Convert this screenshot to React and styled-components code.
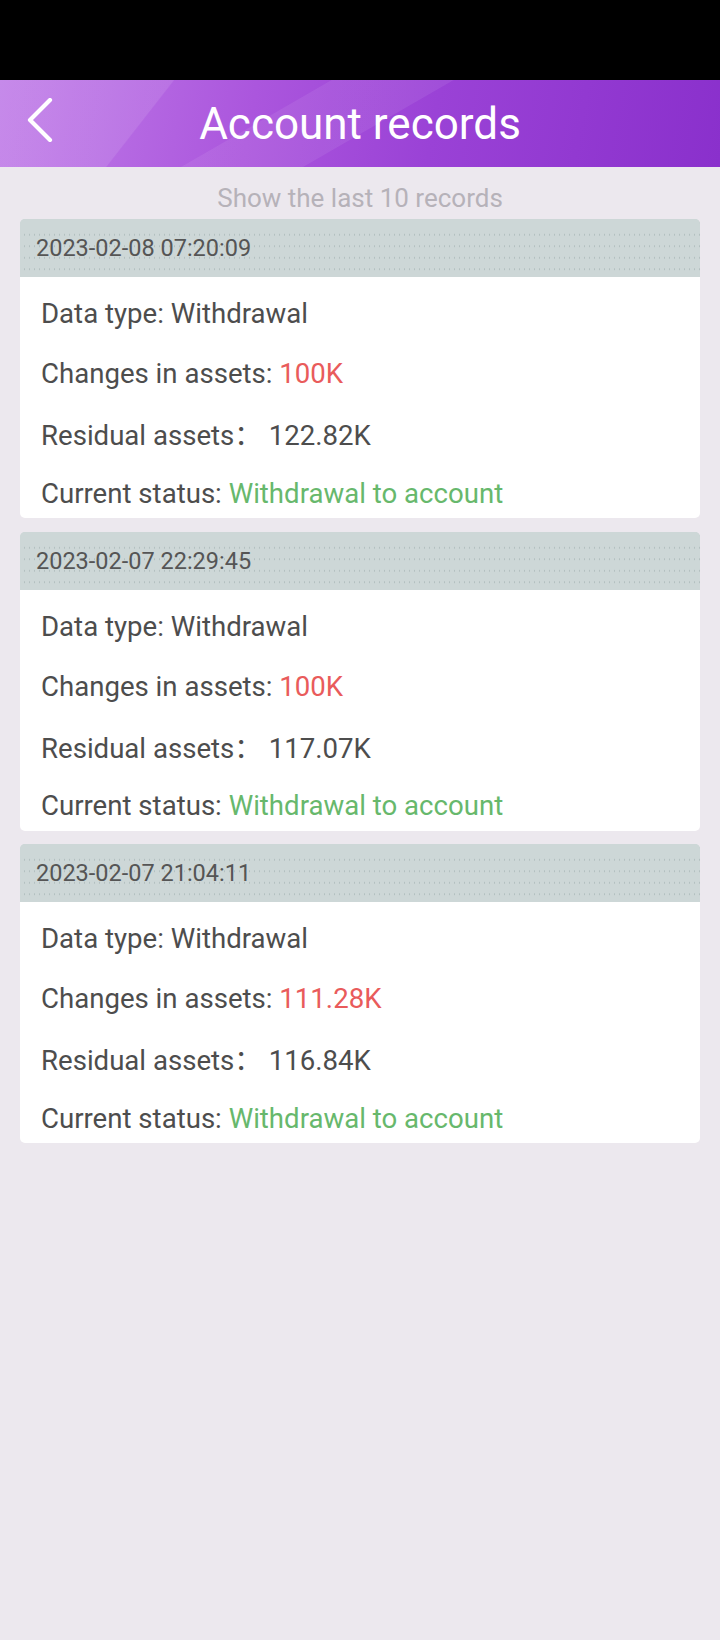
import React from "react";
import styled, { createGlobalStyle } from "styled-components";

const fontStack = `Roboto, "Noto Sans CJK SC", sans-serif`;

const GlobalStyle = createGlobalStyle`
  html, body {
    margin: 0;
    padding: 0;
    background: #ece8ee;
  }
  body {
    font-family: ${fontStack};
  }
  #root {
    min-height: 1640px;
    background: #ece8ee;
  }
`;

const records = [
  {
    date: "2023-02-08 07:20:09",
    type: "Withdrawal",
    change: "100K",
    residual: "122.82K",
    status: "Withdrawal to account",
  },
  {
    date: "2023-02-07 22:29:45",
    type: "Withdrawal",
    change: "100K",
    residual: "117.07K",
    status: "Withdrawal to account",
  },
  {
    date: "2023-02-07 21:04:11",
    type: "Withdrawal",
    change: "111.28K",
    residual: "116.84K",
    status: "Withdrawal to account",
  },
];

const BackIcon = () => (
  <svg width="28" height="44" viewBox="0 0 28 44" fill="none">
    <path
      d="M24 2 L4 22 L24 42"
      stroke="#fff"
      strokeWidth="4.2"
      strokeLinecap="round"
      strokeLinejoin="round"
    />
  </svg>
);

const App = () => {
  return (
    <>
      <GlobalStyle />
      <StyledPage>
        <StatusBar />
        <StyledHeader>
          <BackButton>
            <BackIcon />
          </BackButton>
          <h1>Account records</h1>
        </StyledHeader>
        <Hint>Show the last 10 records</Hint>
        <RecordList>
          {records.map((r) => (
            <Record key={r.date}>
              <DateBar>{r.date}</DateBar>
              <RecordBody>
                <Line>Data type: {r.type}</Line>
                <Line>
                  Changes in assets: <Value tone="red">{r.change}</Value>
                </Line>
                <Line>Residual assets： {r.residual}</Line>
                <Line>
                  Current status: <Value tone="green">{r.status}</Value>
                </Line>
              </RecordBody>
            </Record>
          ))}
        </RecordList>
      </StyledPage>
    </>
  );
};

const StyledPage = styled.div`
  width: 720px;
  min-height: 1640px;
  background: #ece8ee;
  display: flex;
  flex-direction: column;
`;

const StatusBar = styled.div`
  height: 80px;
  background: #000;
`;

const StyledHeader = styled.header`
  height: 87px;
  position: relative;
  display: flex;
  align-items: center;
  justify-content: center;
  background:
    linear-gradient(128deg, rgba(255, 255, 255, 0.1) 0 22%, transparent 22.2%),
    linear-gradient(150deg, transparent 0 38%, rgba(255, 255, 255, 0.07) 38.2% 52%, transparent 52.2%),
    linear-gradient(100deg, #c07de8 0%, #ab56dd 35%, #9a42d6 60%, #8a30cc 100%);

  h1 {
    margin: 0;
    font: 400 44px ${fontStack};
    color: #fff;
    letter-spacing: 0;
  }
`;

const BackButton = styled.div`
  position: absolute;
  left: 26px;
  top: 18px;
  display: flex;
`;

const Hint = styled.div`
  height: 52px;
  display: flex;
  align-items: center;
  justify-content: center;
  font: 400 26px ${fontStack};
  color: #b6b2b9;
  padding-top: 9px;
  box-sizing: border-box;
`;

const RecordList = styled.div`
  display: flex;
  flex-direction: column;
  gap: 13.5px;
  padding: 0 20px;
`;

const Record = styled.div`
  display: flex;
  flex-direction: column;
  border-radius: 5px;
  overflow: hidden;
`;

const DateBar = styled.div`
  height: 58px;
  display: flex;
  align-items: center;
  padding-left: 16px;
  font: 400 23.5px ${fontStack};
  color: #555;
  background-color: #cdd7d7;
  background-image:
    linear-gradient(#cdd7d7, #cdd7d7),
    radial-gradient(circle, rgba(140, 158, 158, 0.4) 0.7px, transparent 1px);
  background-size: 100% 10px, 5px 11.5px;
  background-repeat: no-repeat, repeat;
  background-position: 0 0, 2px 10px;
`;

const RecordBody = styled.div`
  background: #fff;
  height: 241px;
  box-sizing: border-box;
  padding: 7px 0 0 21px;
  display: grid;
  grid-auto-rows: 59.8px;
  overflow: hidden;
`;

const Line = styled.div`
  display: flex;
  align-items: center;
  font: 400 27.6px ${fontStack};
  color: #4d4d4d;
  white-space: pre;
`;

const Value = styled.span`
  color: ${(p) => (p.tone === "red" ? "#e95b5b" : "#67b86c")};
`;

export default App;
